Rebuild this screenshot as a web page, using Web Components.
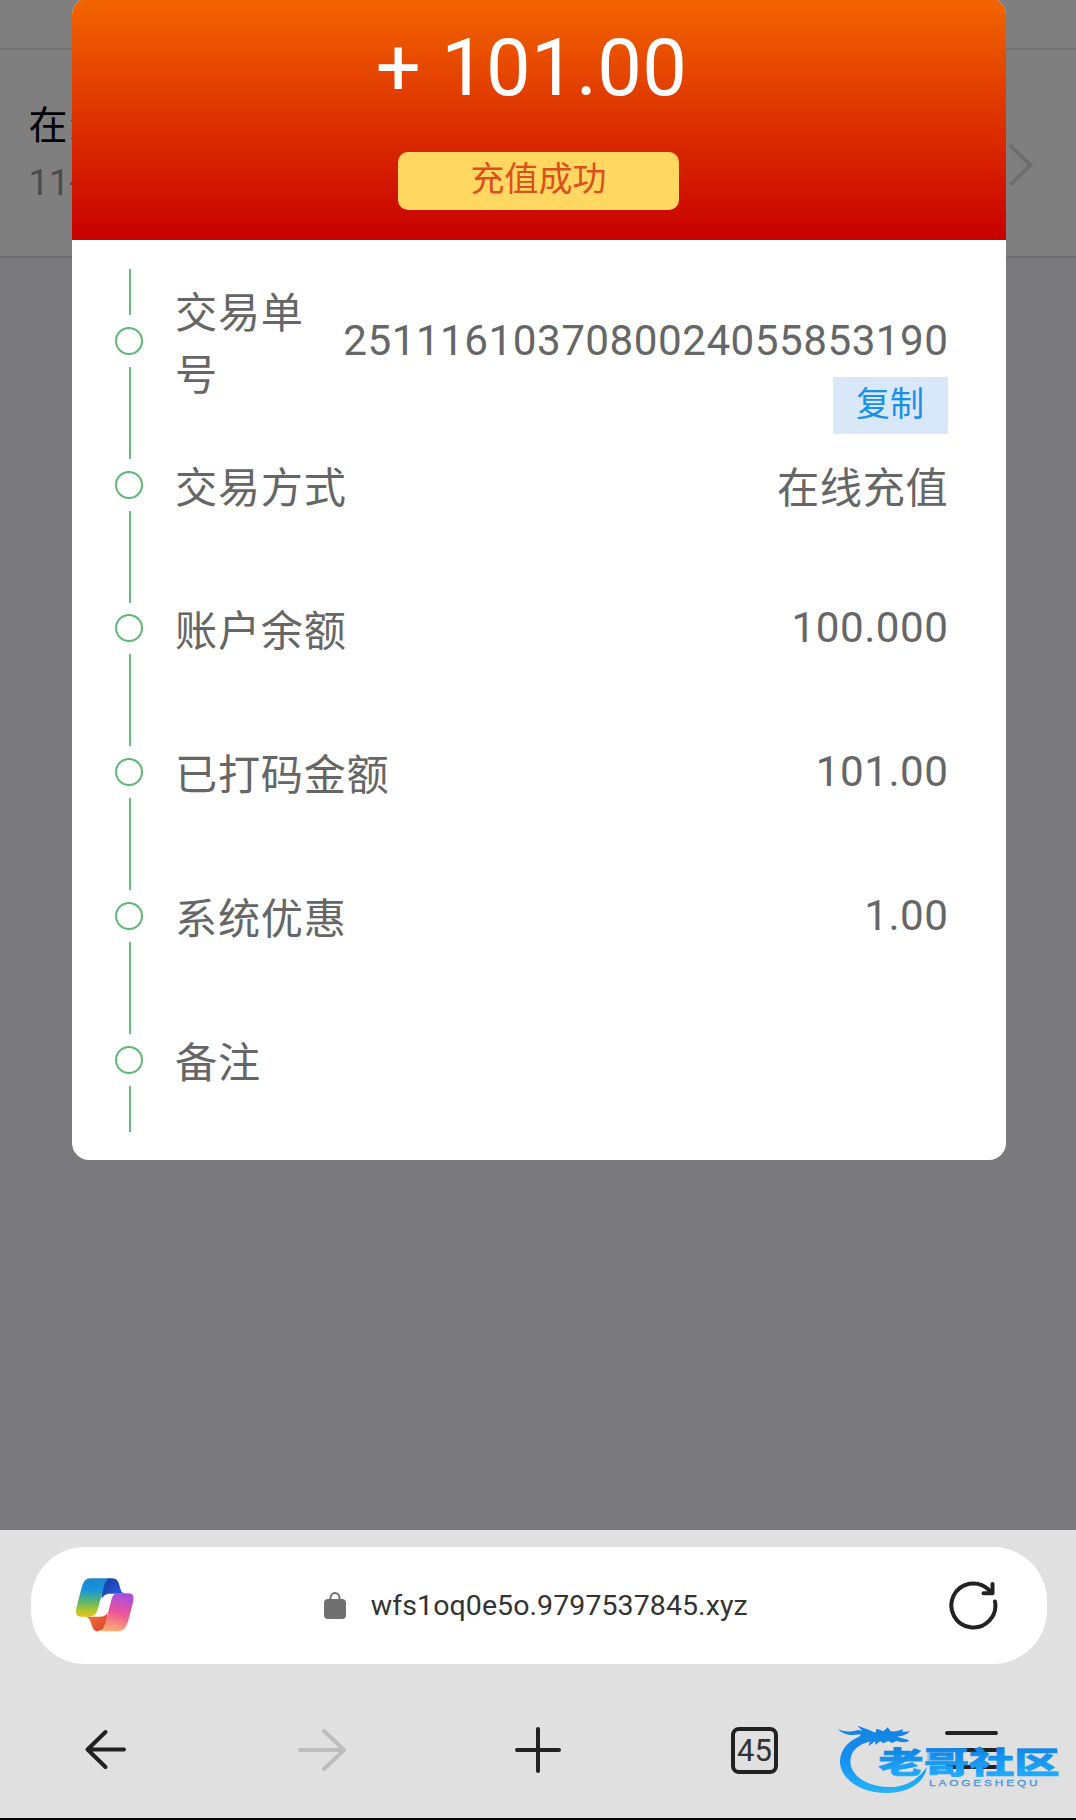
<!DOCTYPE html>
<html lang="zh-CN">
<head>
<meta charset="utf-8">
<meta name="viewport" content="width=device-width, initial-scale=1">
<title>充值成功</title>
<style>
  html,
  body {
    margin: 0;
    height: 100%;
    background: #000;
  }

  body {
    font-family: Roboto, "Noto Sans CJK SC", sans-serif;
    overflow: hidden;
  }
</style>
</head>
<body>
<phone-screen>
  <record-item slot="page" date="11-">在线</record-item>

  <receipt-modal slot="modal" amount="+ 101.00" status="充值成功">
    <receipt-row label="交易单号" copy-text="复制">2511161037080024055853190</receipt-row>
    <receipt-row label="交易方式" class="cjk">在线充值</receipt-row>
    <receipt-row label="账户余额">100.000</receipt-row>
    <receipt-row label="已打码金额">101.00</receipt-row>
    <receipt-row label="系统优惠">1.00</receipt-row>
    <receipt-row label="备注"></receipt-row>
  </receipt-modal>

  <address-bar slot="browser">wfs1oq0e5o.9797537845.xyz</address-bar>
  <browser-nav slot="browser" tabs="45"></browser-nav>
  <site-mark slot="mark"></site-mark>
</phone-screen>

<script>
class PhoneScreen extends HTMLElement {
  constructor() {
    super()
    this.attachShadow({ mode: 'open' })
    this.shadowRoot.innerHTML = `
      <style>
        :host {
          position: relative;
          display: flex;
          flex-direction: column;
          width: 1076px;
          height: 1820px;
          box-sizing: border-box;
          padding-bottom: 2px;
          overflow: hidden;
          background: #000;
        }
        .viewport {
          position: relative;
          flex: 1;
          overflow: hidden;
          background: #f5f5f8;
        }
        .topbar {
          height: 48px;
          background: #fff;
          border-bottom: 2px solid #e4e4e6;
        }
        .backdrop {
          position: absolute;
          inset: 0;
          padding-left: 71.5px;
          background: rgba(0, 0, 0, .5);
        }
        .browser {
          flex: none;
          height: 288.5px;
          box-sizing: border-box;
          padding-top: 17px;
          background: #e0e0e0;
        }
        ::slotted(site-mark) {
          position: absolute;
          right: 16px;
          bottom: 24px;
        }
      </style>
      <div class="viewport">
        <div class="topbar"></div>
        <slot name="page"></slot>
        <div class="backdrop"><slot name="modal"></slot></div>
      </div>
      <div class="browser"><slot name="browser"></slot></div>
      <slot name="mark"></slot>
    `
  }
}

class RecordItem extends HTMLElement {
  constructor() {
    super()
    this.attachShadow({ mode: 'open' })
    this.shadowRoot.innerHTML = `
      <style>
        :host {
          display: flex;
          align-items: center;
          justify-content: space-between;
          height: 208px;
          box-sizing: border-box;
          padding: 0 43px 0 28.5px;
          background: #fff;
          border-bottom: 2px solid #dedee0;
        }
        .info {
          display: flex;
          flex-direction: column;
          margin-top: 2px;
        }
        .title {
          font-size: 39px;
          line-height: 58px;
          letter-spacing: 2px;
          color: #000;
        }
        .date {
          font-size: 36.5px;
          line-height: 56px;
          color: #999;
        }
        svg {
          margin-top: 24px;
        }
      </style>
      <div class="info">
        <span class="title"><slot></slot></span>
        <span class="date">${this.getAttribute('date')}</span>
      </div>
      <svg width="25" height="44" viewBox="0 0 25 44" fill="none" stroke="#dcdcdc" stroke-width="4">
        <path d="M2 2 22.500 22 2 42"/>
      </svg>
    `
  }
}

class ReceiptModal extends HTMLElement {
  constructor() {
    super()
    this.attachShadow({ mode: 'open' })
    this.shadowRoot.innerHTML = `
      <style>
        :host {
          display: block;
          width: 934px;
          height: 1162px;
          margin-top: -2px;
          border-radius: 17px;
          overflow: hidden;
          background: #fff;
        }
        header {
          display: flex;
          flex-direction: column;
          align-items: center;
          height: 242px;
          box-sizing: border-box;
          padding-top: 23px;
          background: linear-gradient(#f26500, #c80000);
        }
        .amount {
          margin-right: 14px;
          font-size: 79.500px;
          line-height: 94px;
          letter-spacing: .3px;
          white-space: pre;
          color: #fff;
        }
        .status {
          width: 281px;
          height: 58px;
          margin-top: 37px;
          border-radius: 10px;
          font-size: 34px;
          line-height: 54px;
          text-align: center;
          color: #d9501c;
          background: #ffd761;
        }
        .rows {
          padding: 29px 57px 0 43px;
        }
      </style>
      <header>
        <div class="amount">${this.getAttribute('amount')}</div>
        <div class="status">${this.getAttribute('status')}</div>
      </header>
      <div class="rows"><slot></slot></div>
    `
  }
}

class ReceiptRow extends HTMLElement {
  constructor() {
    super()

    this.props = {
      label: this.getAttribute('label'),
      copyText: this.getAttribute('copy-text')
    }

    this.attachShadow({ mode: 'open' })
    this._render()
  }

  _render() {
    const { label, copyText } = this.props
    const copyButton = copyText ? `<span class="copy">${copyText}</span>` : ''

    this.shadowRoot.innerHTML = `
      <style>
        :host {
          display: flex;
          align-items: center;
          height: 143.750px;
          font-size: 42.200px;
          line-height: 62px;
          letter-spacing: .5px;
          color: #666;
        }
        .rail {
          flex: none;
          display: flex;
          flex-direction: column;
          align-items: center;
          justify-content: space-between;
          width: 29px;
          height: 100%;
        }
        .line {
          width: 2px;
          height: 46px;
          margin-left: 2px;
          background: #68bd7b;
        }
        .dot {
          width: 24px;
          height: 24px;
          border: 2px solid #5dba72;
          border-radius: 50%;
        }
        .label {
          flex: 1;
          padding: 8px 20px 0 31.500px;
          letter-spacing: .7px;
        }
        .value {
          position: relative;
          flex: none;
        }
        :host(.cjk) .value {
          padding-top: 9px;
          letter-spacing: .7px;
        }
        /* hangs below the number without moving it off the row's centre */
        .copy {
          position: absolute;
          right: 1px;
          top: 67px;
          width: 115px;
          height: 57px;
          font-size: 34px;
          line-height: 54px;
          letter-spacing: 0;
          text-align: center;
          color: #1a8fe6;
          background: #d8e8f8;
        }
      </style>
      <div class="rail">
        <i class="line"></i>
        <i class="dot"></i>
        <i class="line"></i>
      </div>
      <div class="label">${label}</div>
      <div class="value"><slot></slot>${copyButton}</div>
    `
  }
}

class AddressBar extends HTMLElement {
  constructor() {
    super()
    this.attachShadow({ mode: 'open' })
    this.shadowRoot.innerHTML = `
      <style>
        :host {
          display: flex;
          align-items: center;
          justify-content: space-between;
          height: 117px;
          margin: 0 29.500px 0 31px;
          box-sizing: border-box;
          padding: 0 49px 0 44px;
          border-radius: 54px;
          background: #fff;
        }
        .url {
          display: flex;
          align-items: center;
          gap: 25px;
          margin-right: 12px;
          padding-top: 1px;
          font-size: 28.500px;
          letter-spacing: .08px;
          color: #333;
        }
        svg {
          display: block;
        }
      </style>
      <svg width="60" height="56" viewBox="75 51 180 168">
        <defs>
          <linearGradient id="left" x1="0" y1="0" x2="0" y2="1">
            <stop offset="0" stop-color="#2087c8"/>
            <stop offset=".28" stop-color="#1492df"/>
            <stop offset=".6" stop-color="#5cb56f"/>
            <stop offset=".85" stop-color="#b7c52d"/>
            <stop offset="1" stop-color="#e2c41c"/>
          </linearGradient>
          <linearGradient id="top" x1="0" y1="0" x2="1" y2="1">
            <stop offset="0" stop-color="#18379a"/>
            <stop offset="1" stop-color="#2c66ee"/>
          </linearGradient>
          <linearGradient id="right" x1=".6" y1="0" x2=".4" y2="1">
            <stop offset="0" stop-color="#a44ee0"/>
            <stop offset=".5" stop-color="#ee5598"/>
            <stop offset="1" stop-color="#ffb070"/>
          </linearGradient>
          <linearGradient id="bottom" x1="0" y1="0" x2="1" y2="1">
            <stop offset="0" stop-color="#f47a3c"/>
            <stop offset="1" stop-color="#d9402c"/>
          </linearGradient>
        </defs>
        <path fill="url(#top)" d="M154 112 157 75C160 60 170 55 183 55C202 55 206 65 210 82C213 95 216 100 228 101L182 101C169 101 163 104 158 113Z"/>
        <path fill="url(#left)" d="M122 55H185C171 55 166 65 161 83L145 142C139 162 133 170 117 170H94C78 170 76 160 79 144L93 90C100 64 106 55 122 55Z"/>
        <path fill="url(#bottom)" d="M104 170H150C161 170 167 166 172 158L170 190 160 208 143 214C130 213 127 202 123 188C119 176 115 171 104 170Z"/>
        <path fill="url(#right)" d="M203 100H234C250 100 253 109 249 127L236 178C229 204 221 214 204 214H142C156 214 161 206 166 188L182 128C187 109 189 102 203 100Z"/>
      </svg>
      <div class="url">
        <svg width="22" height="28" viewBox="0 0 22 28">
          <path d="M6.500 9V6a4.500 5 0 0 1 9 0V9" fill="none" stroke="#707070" stroke-width="2"/>
          <rect y="7" width="22" height="20" rx="4" fill="#707070"/>
        </svg>
        <slot></slot>
      </div>
      <svg width="49" height="50" viewBox="0 0 49 50" fill="none" stroke="#222" stroke-width="4" stroke-linecap="round" stroke-linejoin="round">
        <path d="M46 21.500A22 22 0 1 1 39.500 9.500L43 12.500"/>
        <path d="M43.500 4V13.300H34.500"/>
      </svg>
    `
  }
}

class BrowserNav extends HTMLElement {
  constructor() {
    super()
    this.attachShadow({ mode: 'open' })
    this.shadowRoot.innerHTML = `
      <style>
        :host {
          display: grid;
          grid-template-columns: repeat(5, 216.500px);
          justify-content: center;
          place-items: center;
          height: 154px;
          padding-top: 9.500px;
          box-sizing: content-box;
        }
        svg {
          fill: none;
          stroke: #222;
          stroke-width: 4;
          stroke-linecap: round;
          stroke-linejoin: round;
        }
        .forward {
          stroke: #bdbdbd;
        }
        .tabs {
          width: 47px;
          height: 47px;
          box-sizing: border-box;
          border: 4px solid #222;
          border-radius: 8px;
          font-size: 31px;
          line-height: 39px;
          text-align: center;
          color: #333;
        }
      </style>
      <svg width="42" height="42" viewBox="0 0 42 42"><path d="M40 20.500H3.500M21.500 3 3.500 20.500 21.500 38"/></svg>
      <svg class="forward" width="48" height="44" viewBox="0 0 48 44"><path d="M2 22H46M26 3 46 22 26 41"/></svg>
      <svg width="46" height="46" viewBox="0 0 46 46"><path d="M2 23H44M23 2V44"/></svg>
      <div class="tabs">${this.getAttribute('tabs')}</div>
      <svg width="54" height="40" viewBox="0 0 54 40"><path d="M3 3H52M3 20H52M3 37H52"/></svg>
    `
  }
}

class SiteMark extends HTMLElement {
  constructor() {
    super()
    this.attachShadow({ mode: 'open' })
    this.shadowRoot.innerHTML = `
      <style>
        :host {
          display: block;
          width: 224px;
          height: 76px;
        }
        svg {
          display: block;
        }
        .name {
          font: 900 90px "Noto Sans CJK SC", sans-serif;
        }
        .latin {
          font: 400 29px "Liberation Sans", sans-serif;
          letter-spacing: 7px;
        }
      </style>
      <svg width="224" height="76" viewBox="48 30 672 228">
        <defs>
          <linearGradient id="blue" gradientUnits="userSpaceOnUse" x1="0" y1="50" x2="0" y2="250">
            <stop offset="0" stop-color="#1583e0"/>
            <stop offset=".45" stop-color="#148dee"/>
            <stop offset="1" stop-color="#26b4fb"/>
          </linearGradient>
          <linearGradient id="name" x1="0" y1="0" x2="0" y2="1">
            <stop offset=".2" stop-color="#0f82e4"/>
            <stop offset=".9" stop-color="#22adfa"/>
          </linearGradient>
        </defs>
        <g fill="url(#blue)">
          <path d="M128 76C82 92 60 122 60 156C62 208 122 249 200 249C265 249 316 216 320 172C290 214 250 233 204 231C134 229 91 193 91 154C92 124 112 104 152 94Z"/>
          <path d="M54 57C76 67 94 66 113 60L127 62L112 47L142 58L166 68L170 56L190 64L203 52L211 63C228 67 241 60 249 58L247 66L270 64C259 76 245 78 232 80L268 91C260 100 246 97 229 93L216 99L205 93L190 100L181 94L165 105L166 94L146 108L149 94L130 94L117 82L122 73L100 75C80 75 64 69 54 57Z"/>
        </g>
        <!-- faint fill behind the second character -->
        <path d="M322 116H400V160H322Z" fill="#2b9cf0" opacity=".5"/>
        <text class="name" fill="url(#name)" stroke="url(#name)" stroke-width="2" x="175" y="188" textLength="544" lengthAdjust="spacingAndGlyphs">老哥社区</text>
        <text class="latin" fill="#4a97dc" stroke="#4a97dc" x="327" y="229" textLength="334" lengthAdjust="spacingAndGlyphs">LAOGESHEQU</text>
      </svg>
    `
  }
}

customElements.define('phone-screen', PhoneScreen)
customElements.define('record-item', RecordItem)
customElements.define('receipt-modal', ReceiptModal)
customElements.define('receipt-row', ReceiptRow)
customElements.define('address-bar', AddressBar)
customElements.define('browser-nav', BrowserNav)
customElements.define('site-mark', SiteMark)
</script>
</body>
</html>
